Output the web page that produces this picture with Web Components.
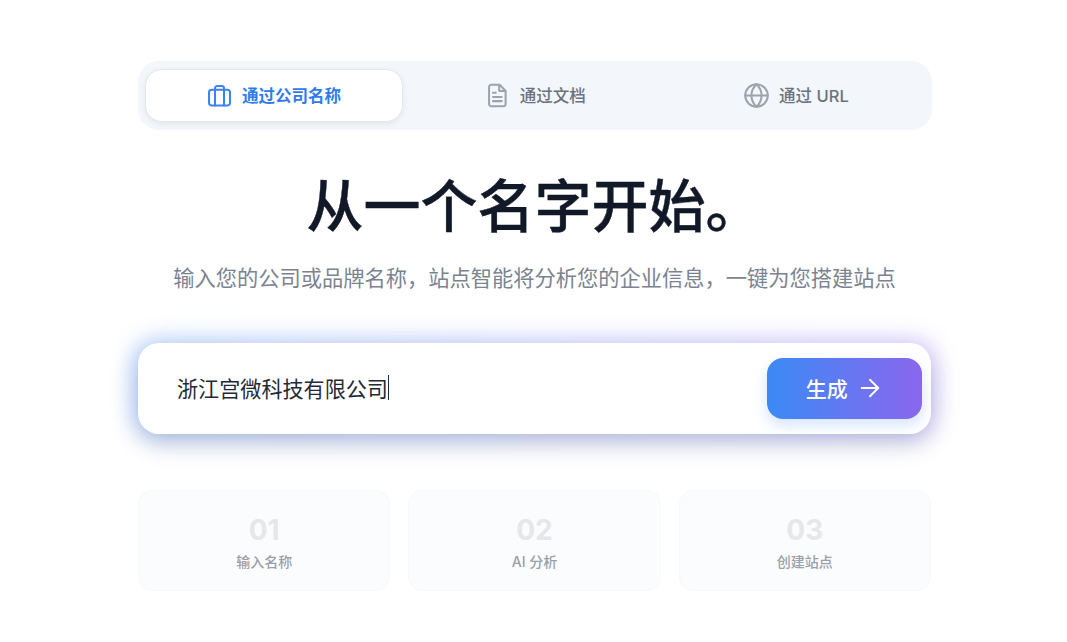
<!DOCTYPE html>
<html lang="zh-CN"><head><meta charset="utf-8"><title>从一个名字开始</title>
<style>
html,body{margin:0;background:#fff;height:100%;overflow:hidden}
body{font-family:Inter,"Noto Sans CJK SC",sans-serif}
</style></head><body>
<start-page>
  <mode-tabs>
    <mode-tab active label="通过公司名称" icon="case"></mode-tab>
    <mode-tab label="通过文档" icon="doc"></mode-tab>
    <mode-tab label="通过 URL" icon="globe"></mode-tab>
  </mode-tabs>
  <hero-title title-text="从一个名字开始。" sub="输入您的公司或品牌名称，站点智能将分析您的企业信息，一键为您搭建站点"></hero-title>
  <gen-box value="浙江宫微科技有限公司" action="生成"></gen-box>
  <step-row>
    <step-card num="01" label="输入名称"></step-card>
    <step-card num="02" label="AI 分析"></step-card>
    <step-card num="03" label="创建站点"></step-card>
  </step-row>
</start-page>
<script>
const icons={
case:'<rect x="2.7" y="6.800" width="18.600" height="14" rx="2.300"/><path d="M8 20.800V5.500A2 2 0 0 1 10 3.500h4a2 2 0 0 1 2 2v15.300"/>',
doc:'<path d="M6.500 2.500h7.500l5.200 5.500v11.500a2 2 0 0 1-2 2H6.500a2 2 0 0 1-2-2v-15a2 2 0 0 1 2-2z"/><path d="M13.500 3v5h5.500M8 9.500h2.500M8 13.300h7.700M8 17h7.700"/>',
globe:'<circle cx="12" cy="12" r="10"/><path d="M2 12h20M12 2c3 2.800 4.500 6.200 4.500 10S15 19.200 12 22c-3-2.800-4.500-6.200-4.500-10S9 4.800 12 2z"/>'};
function def(name,fn){customElements.define(name,class extends HTMLElement{connectedCallback(){if(this.shadowRoot)return;this.attachShadow({mode:'open'}).innerHTML=fn(this)}})}
def('start-page',()=>`<style>:host{display:flex;flex-direction:column;box-sizing:border-box;width:793px;margin-left:138px;padding-top:61px}</style><slot></slot>`);
def('mode-tabs',()=>`<style>:host{display:grid;grid-template-columns:repeat(3,1fr);gap:3px;box-sizing:border-box;height:68.500px;margin-right:-.5px;padding:7.500px 6.500px;background:#f3f6fa;border-radius:21px}</style><slot></slot>`);
def('mode-tab',e=>{const a=e.hasAttribute('active');return `<style>:host{display:flex;align-items:center;justify-content:center;gap:9px;height:53.500px;box-sizing:border-box;border-radius:17px;font-size:16.500px;font-weight:${a?600:500};color:${a?'#2f7bed':'#6b7280'};${a?'background:#fff;border:1px solid #e4e7ec;box-shadow:0 2px 6px rgba(15,23,42,.07);':''}}
svg{width:27px;height:27px;flex:none;fill:none;stroke:${a?'#3b82f6':'#9ca3af'};stroke-width:1.800;stroke-linejoin:round;stroke-linecap:round}
span{padding-bottom:1px}</style><svg viewBox="0 0 24 24">${icons[e.getAttribute('icon')]}</svg><span>${e.getAttribute('label')}</span>`});
def('hero-title',e=>`<style>:host{display:flex;flex-direction:column;align-items:center}
h1{margin:40px 0 0;font-size:57px;line-height:74px;font-weight:500;-webkit-text-stroke:.4px #111827;color:#111827;white-space:nowrap}
p{margin:18.500px 0 0;font-size:21.250px;line-height:32px;color:#7b8391;white-space:nowrap}</style><h1>${e.getAttribute('title-text')}</h1><p>${e.getAttribute('sub')}</p>`);
def('gen-box',e=>`<style>:host{display:block;position:relative;height:91px;margin-top:49px}
.glow{position:absolute;inset:-5px -6px -3px;border-radius:26px;background:linear-gradient(90deg,#5f9af8,#a98cf5);opacity:.42;filter:blur(11px)}
.card{position:relative;display:flex;align-items:center;justify-content:space-between;box-sizing:border-box;height:91px;padding:0 9px 0 39px;background:#fff;border-radius:21px;box-shadow:0 11px 24px -2px rgba(71,85,135,.27)}
.v{display:flex;align-items:center;font-size:21.100px;color:#1f2937;padding-bottom:2px}
.c{width:1.500px;height:25px;background:#1f2937}
button{all:unset;box-sizing:border-box;width:155px;height:61px;display:flex;align-items:center;justify-content:center;gap:11.500px;padding:0 2px 2px 0;border-radius:16px;font:500 21px Inter,"Noto Sans CJK SC",sans-serif;color:#fff;background:linear-gradient(90deg,#3b8af5,#8b66ee);box-shadow:0 6px 14px rgba(59,130,246,.22)}
svg{width:22px;height:22px;fill:none;stroke:#fff;stroke-width:2.200;stroke-linecap:round;stroke-linejoin:round}</style>
<div class="glow"></div><div class="card"><div class="v"><span>${e.getAttribute('value')}</span><span class="c"></span></div><button>${e.getAttribute('action')}<svg viewBox="0 0 24 24"><path d="M3 12h18M12 3l9 9-9 9"/></svg></button></div>`);
def('step-row',()=>`<style>:host{display:grid;grid-template-columns:repeat(3,1fr);gap:18px;margin-top:56px}</style><slot></slot>`);
def('step-card',e=>`<style>:host{display:flex;flex-direction:column;align-items:center;box-sizing:border-box;height:101px;background:#fbfcfe;border:1px solid #f8f9fb;border-radius:14px;padding-top:21px}
b{font-size:28px;line-height:36px;font-weight:700;color:#e6e7ea}
span{margin-top:3px;font-size:14px;line-height:22px;font-weight:500;color:#9a9fa9}</style><b>${e.getAttribute('num')}</b><span>${e.getAttribute('label')}</span>`);
</script></body></html>
